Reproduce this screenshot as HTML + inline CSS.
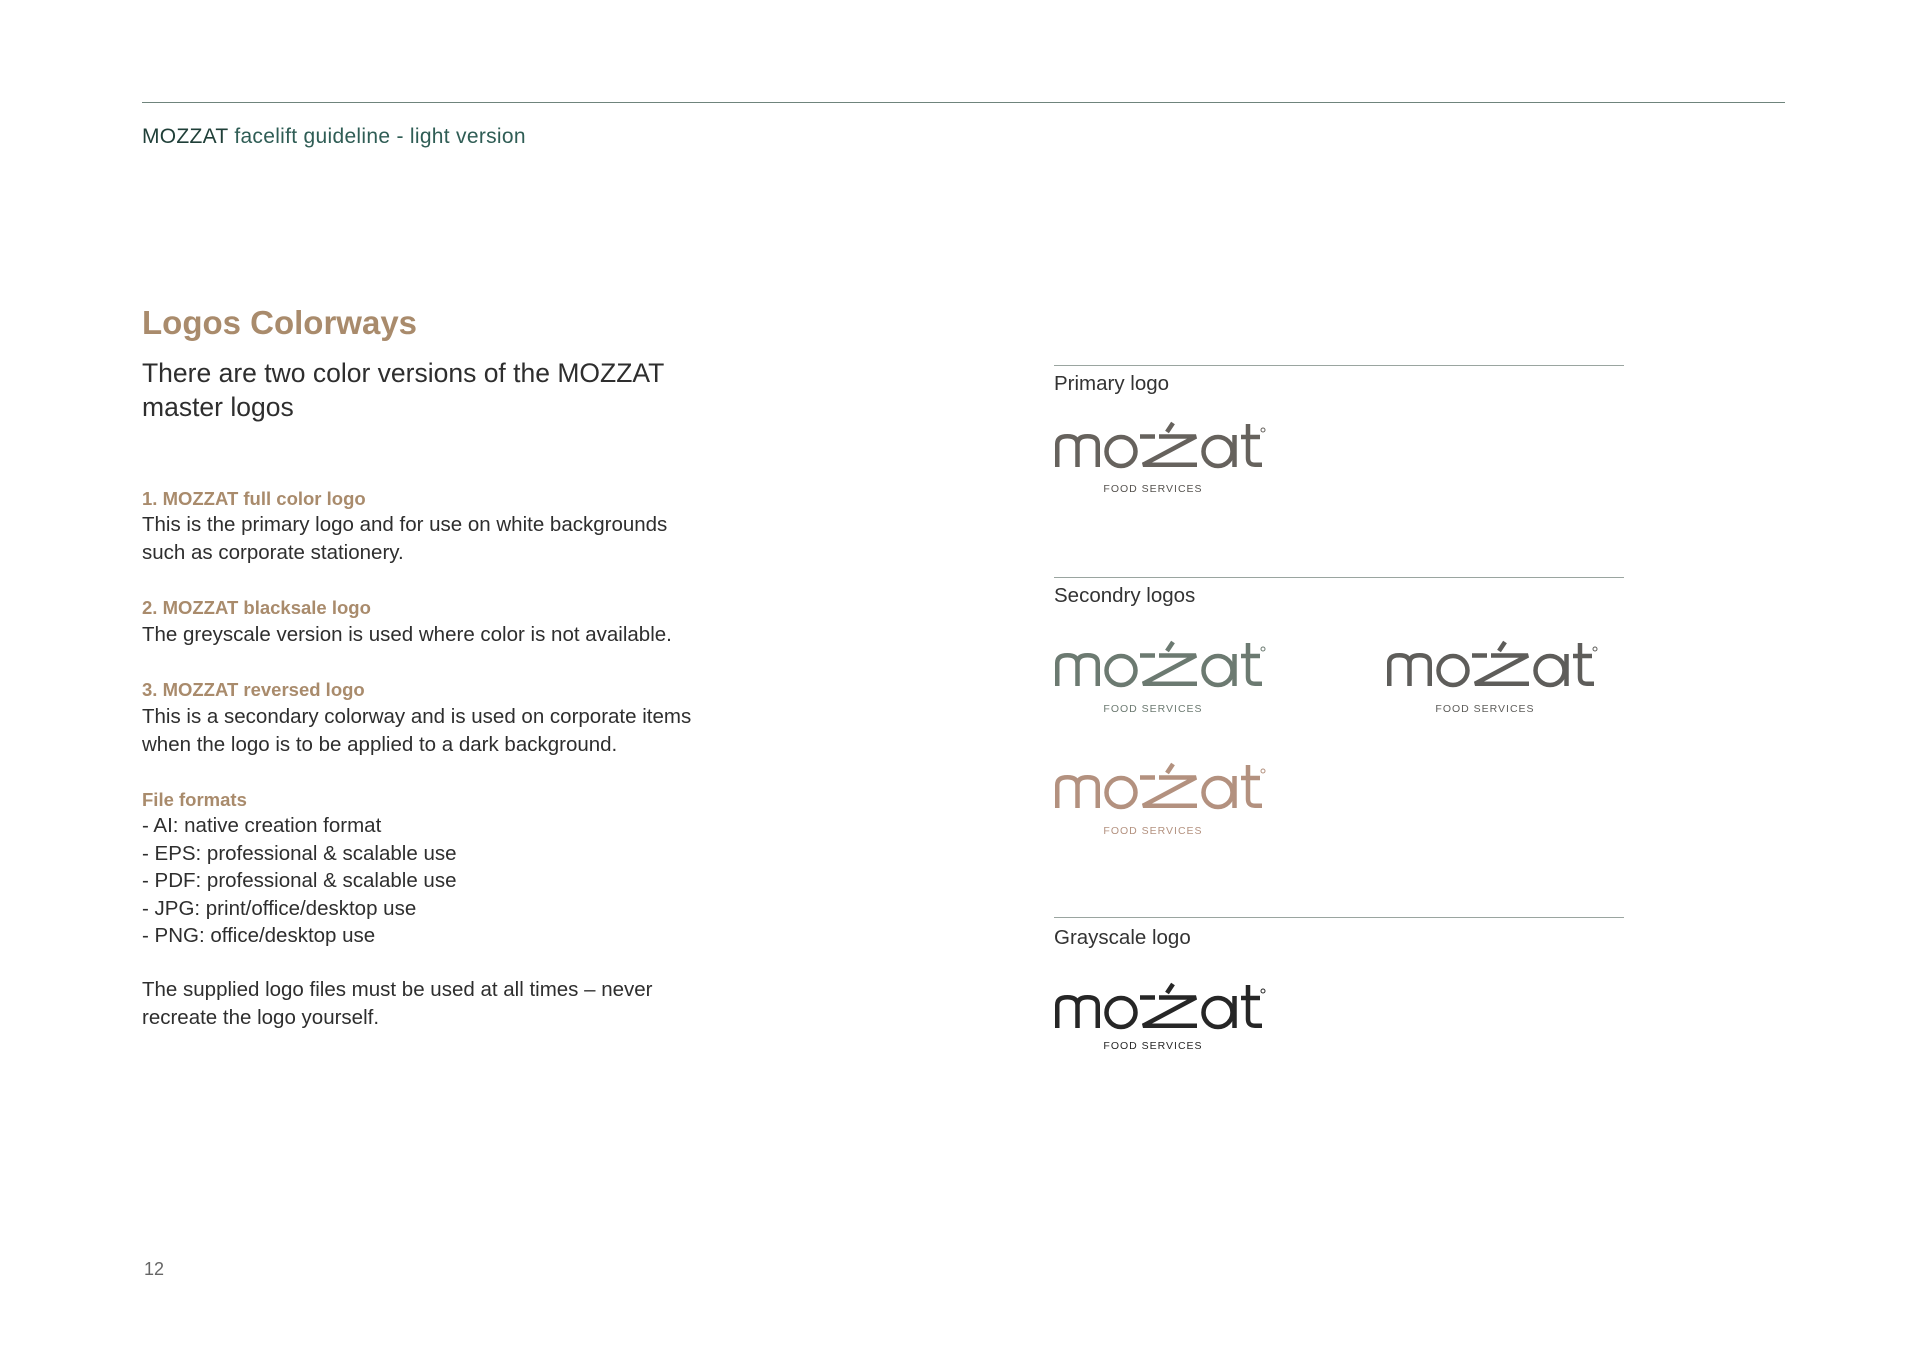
<!DOCTYPE html>
<html><head><meta charset="utf-8"><style>
*{margin:0;padding:0;box-sizing:border-box}
body{width:1920px;height:1357px;background:#fff;position:relative;font-family:"Liberation Sans",sans-serif;color:#2e2e2e;overflow:hidden}
.a{position:absolute;white-space:nowrap}
.hl{position:absolute;height:1px;background:#9aa5a0}
.h{color:#a98b6c;font-weight:bold;font-size:18.5px}
.b{font-size:20.5px;line-height:27.5px}
.lbl{font-size:20.5px;color:#333}
.fs{position:absolute;font-size:10.5px;letter-spacing:1px;text-align:center;width:120px}
svg{position:absolute;overflow:visible}
</style></head><body>
<div class="hl" style="left:142px;top:102px;width:1643px;background:#6f847c"></div>
<div class="a" style="left:142px;top:125px;font-size:21px;color:#2f5d55;letter-spacing:.3px"><span style="color:#1f3f38">MOZZAT</span> facelift guideline - light version</div>

<div class="a" style="left:142px;top:304px;font-size:33px;font-weight:bold;color:#a98b6c">Logos Colorways</div>
<div class="a" style="left:142px;top:356px;font-size:26.5px;line-height:34px;color:#2e2e2e">There are two color versions of the MOZZAT<br>master logos</div>

<div class="a h" style="left:142px;top:488px">1. MOZZAT full color logo</div>
<div class="a b" style="left:142px;top:511px">This is the primary logo and for use on white backgrounds<br>such as corporate stationery.</div>
<div class="a h" style="left:142px;top:597px">2. MOZZAT blacksale logo</div>
<div class="a b" style="left:142px;top:621px">The greyscale version is used where color is not available.</div>
<div class="a h" style="left:142px;top:679px">3. MOZZAT reversed logo</div>
<div class="a b" style="left:142px;top:703px">This is a secondary colorway and is used on corporate items<br>when the logo is to be applied to a dark background.</div>
<div class="a h" style="left:142px;top:789px">File formats</div>
<div class="a b" style="left:142px;top:812px">- AI: native creation format<br>- EPS: professional &amp; scalable use<br>- PDF: professional &amp; scalable use<br>- JPG: print/office/desktop use<br>- PNG: office/desktop use</div>
<div class="a b" style="left:142px;top:976px">The supplied logo files must be used at all times – never<br>recreate the logo yourself.</div>
<div class="a" style="left:144px;top:1259px;font-size:18px;color:#666">12</div>

<div class="hl" style="left:1054px;top:365px;width:570px"></div>
<div class="a lbl" style="left:1054px;top:372px">Primary logo</div>
<div class="hl" style="left:1054px;top:577px;width:570px"></div>
<div class="a lbl" style="left:1054px;top:584px">Secondry logos</div>
<div class="hl" style="left:1054px;top:917px;width:570px"></div>
<div class="a lbl" style="left:1054px;top:926px">Grayscale logo</div>

<svg width="0" height="0"><defs>
<g id="lg" fill="none" stroke-width="4.5" stroke-linecap="butt">
<path d="M2.25 47V24Q2.25 16.25 12.4 16.25Q22.5 16.25 22.5 24V47M22.5 24Q22.5 16.25 32.6 16.25Q42.75 16.25 42.75 24V47"/>
<circle cx="66" cy="31.5" r="14.5"/>
<path d="M85 16.5H100M104 16.5H141L88 44.75H142"/>
<path d="M118 3L112 12"/>
<circle cx="163" cy="31.5" r="14.5"/>
<path d="M179.5 15V47"/>
<path d="M193 4V38Q193 44.75 200 44.75H207M186 17H205"/>
<circle cx="208" cy="10" r="2" stroke-width="1"/>
</g></defs></svg>

<svg style="left:1055px;top:420px" width="211" height="48" viewBox="0 0 211 48"><use href="#lg" stroke="#66625d"/></svg>
<div class="fs" style="left:1093px;top:483px;color:#55524e">FOOD SERVICES</div>

<svg style="left:1055px;top:639px" width="211" height="48" viewBox="0 0 211 48"><use href="#lg" stroke="#6c7a71"/></svg>
<div class="fs" style="left:1093px;top:703px;color:#6c7a71">FOOD SERVICES</div>

<svg style="left:1387px;top:639px" width="211" height="48" viewBox="0 0 211 48"><use href="#lg" stroke="#5e5d5a"/></svg>
<div class="fs" style="left:1425px;top:703px;color:#5e5d5a">FOOD SERVICES</div>

<svg style="left:1055px;top:761px" width="211" height="48" viewBox="0 0 211 48"><use href="#lg" stroke="#b3917f"/></svg>
<div class="fs" style="left:1093px;top:825px;color:#b3917f">FOOD SERVICES</div>

<svg style="left:1055px;top:981px" width="211" height="48" viewBox="0 0 211 48"><use href="#lg" stroke="#262626"/></svg>
<div class="fs" style="left:1093px;top:1040px;color:#262626">FOOD SERVICES</div>
</body></html>
